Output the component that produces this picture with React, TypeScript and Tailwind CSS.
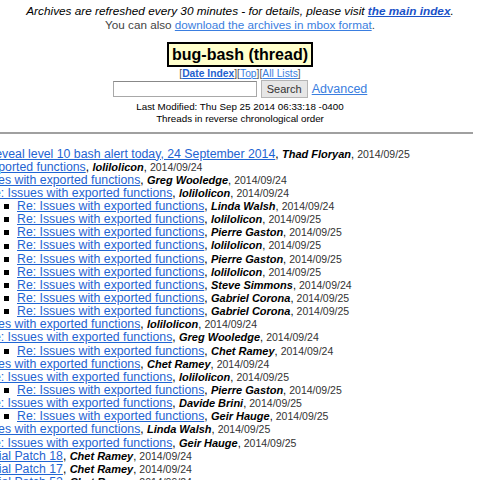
import React from "react";

type Row = { level: number; subject: string; author: string; date: string };

const RE = "Re: Issues with exported functions";

const ROWS: Row[] = [
  { level: 0, subject: "CERT/NIST: reveal level 10 bash alert today, 24 September 2014", author: "Thad Floryan", date: "2014/09/25" },
  { level: 0, subject: "Issues with exported functions", author: "lolilolicon", date: "2014/09/24" },
  { level: 1, subject: RE, author: "Greg Wooledge", date: "2014/09/24" },
  { level: 2, subject: RE, author: "lolilolicon", date: "2014/09/24" },
  { level: 3, subject: RE, author: "Linda Walsh", date: "2014/09/24" },
  { level: 3, subject: RE, author: "lolilolicon", date: "2014/09/25" },
  { level: 3, subject: RE, author: "Pierre Gaston", date: "2014/09/25" },
  { level: 3, subject: RE, author: "lolilolicon", date: "2014/09/25" },
  { level: 3, subject: RE, author: "Pierre Gaston", date: "2014/09/25" },
  { level: 3, subject: RE, author: "lolilolicon", date: "2014/09/25" },
  { level: 3, subject: RE, author: "Steve Simmons", date: "2014/09/24" },
  { level: 3, subject: RE, author: "Gabriel Corona", date: "2014/09/25" },
  { level: 3, subject: RE, author: "Gabriel Corona", date: "2014/09/25" },
  { level: 1, subject: RE, author: "lolilolicon", date: "2014/09/24" },
  { level: 2, subject: RE, author: "Greg Wooledge", date: "2014/09/24" },
  { level: 3, subject: RE, author: "Chet Ramey", date: "2014/09/24" },
  { level: 1, subject: RE, author: "Chet Ramey", date: "2014/09/24" },
  { level: 2, subject: RE, author: "lolilolicon", date: "2014/09/25" },
  { level: 3, subject: RE, author: "Pierre Gaston", date: "2014/09/25" },
  { level: 2, subject: RE, author: "Davide Brini", date: "2014/09/25" },
  { level: 3, subject: RE, author: "Geir Hauge", date: "2014/09/25" },
  { level: 1, subject: RE, author: "Linda Walsh", date: "2014/09/25" },
  { level: 2, subject: RE, author: "Geir Hauge", date: "2014/09/25" },
  { level: 0, subject: "Bash-4.3 Official Patch 18", author: "Chet Ramey", date: "2014/09/24" },
  { level: 0, subject: "Bash-4.3 Official Patch 17", author: "Chet Ramey", date: "2014/09/24" },
  { level: 0, subject: "Bash-3.2 Official Patch 52", author: "Chet Ramey", date: "2014/09/24" },
];

const INDENT = ["pl-0", "pl-[32px]", "pl-[64px]", "pl-[83px]"];

const font = { fontFamily: '"Liberation Sans", Arial, sans-serif' };

function ThreadRow({ row }: { row: Row }) {
  return (
    <li className={`flex items-baseline whitespace-nowrap h-[13.15px] leading-[13.15px] ${INDENT[row.level]}`}>
      {row.level === 3 && (
        <span className="inline-block w-[5px] h-[5px] bg-black mr-[8px] self-center" />
      )}
      <a className="text-[12.3px] text-[#1f64d2] underline">{row.subject}</a>
      <span className="text-[12px] text-black">,&nbsp;</span>
      <em className="text-[11px] font-bold italic text-black">{row.author}</em>
      <span className="text-[11px] text-black">,&nbsp;</span>
      <span className="text-[10.5px] text-[#333]">{row.date}</span>
    </li>
  );
}

export default function App() {
  return (
    <div className="w-[480px] h-[480px] overflow-hidden bg-white text-black" style={font}>
      <div className="pt-[4px] text-center">
        <p className="text-[11.8px] leading-[14px] italic">
          Archives are refreshed every 30 minutes - for details, please visit{" "}
          <a className="font-bold text-[#1a52c8] underline">the main index</a>.
        </p>
        <p className="text-[11.7px] leading-[13px] text-[#444]">
          You can also <a className="text-[#3a7ee0] underline">download the archives in mbox format</a>.
        </p>

        <div className="mt-[11px]">
          <span className="inline-block h-[25px] border-2 border-black bg-[#ffffcc] px-[3px] text-[16px] leading-[21px] font-bold">
            bug-bash (thread)
          </span>
        </div>

        <p className="text-[10.3px] leading-[12px] mt-px text-[#555]">
          [<a className="font-bold text-[#1f62d0] underline">Date Index</a>][
          <a className="text-[#3a7ee0] underline">Top</a>][
          <a className="text-[#3a7ee0] underline">All Lists</a>]
        </p>

        <div className="flex justify-center items-center h-[18px]">
          <input
            type="text"
            className="w-[144px] h-[16px] border border-[#a8a8a8] border-t-[#888] bg-white outline-none"
          />
          <button
            type="button"
            className="ml-[4px] w-[47px] h-[18px] bg-[#e6e6e6] border border-[#b5b5b5] text-[11px] leading-[16px] text-[#333]"
          >
            Search
          </button>
          <a className="ml-[4px] text-[12.5px] text-[#3a7ee0] underline">Advanced</a>
        </div>

        <p className="text-[9.8px] leading-[12px] mt-[3px]">Last Modified: Thu Sep 25 2014 06:33:18 -0400</p>
        <p className="text-[9.8px] leading-[12px]">Threads in reverse chronological order</p>
      </div>

      <hr className="mt-[7px] mr-[7px] border-0 border-t-2 border-t-[#a0a0a0]" />

      <ul className="mt-[13.5px] ml-[-79px]">
        {ROWS.map((row, i) => (
          <ThreadRow key={i} row={row} />
        ))}
      </ul>
    </div>
  );
}
